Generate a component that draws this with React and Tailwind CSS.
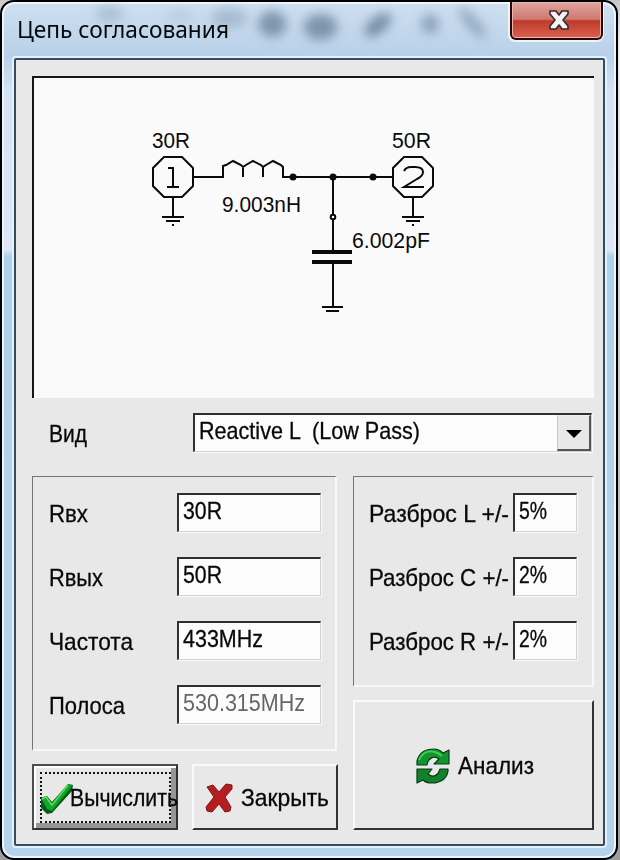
import { useLayoutEffect, useRef, useState } from 'react';

// Single-line text squeezed horizontally to a given width, like a bitmap UI font.
function Fit({ w, className = '', children }) {
  const ref = useRef(null);
  const [scale, setScale] = useState(1);
  useLayoutEffect(() => {
    setScale(w / ref.current.getBoundingClientRect().width);
  }, []);
  return (
    <span className="block shrink-0 whitespace-pre" style={{ width: w }}>
      <span ref={ref} className={`inline-block origin-left ${className}`} style={{ transform: `scaleX(${scale})` }}>
        {children}
      </span>
    </span>
  );
}

const inset = 'border-t-[2px] border-l-[2px] border-r border-b border-t-[#303030] border-l-[#303030] border-r-[#d0d0d0] border-b-[#d0d0d0] shadow-[1px_1px_0_#fafafa] bg-[#fcfcfc]';
const group = 'border-t-[1.5px] border-l-[1.5px] border-r-2 border-b-2 border-t-[#757575] border-l-[#757575] border-r-[#f8f8f8] border-b-[#f8f8f8]';

function Field({ label, lw, value, vw, dim }) {
  return (
    <div className="flex h-[41px] items-start">
      <div className="w-[128px] pt-[6px]"><Fit w={lw}>{label}</Fit></div>
      <div className={`mt-[1px] h-[39px] w-[144px] pl-[4px] ${inset}`}>
        <Fit w={vw} className={dim ? 'text-[#666] [-webkit-text-stroke:0px]' : ''}>{value}</Fit>
      </div>
    </div>
  );
}

function Spread({ label, value }) {
  return (
    <div className="flex h-[41px] items-start">
      <div className="w-[144px] pt-[6px]"><Fit w={140}>{label}</Fit></div>
      <div className={`mt-[1px] h-[39px] w-[64px] pl-[4px] ${inset}`}><Fit w={28}>{value}</Fit></div>
    </div>
  );
}

function Schematic() {
  return (
    <svg width="559" height="319" viewBox="34 78 559 319" fill="none" stroke="#0a0a0a" strokeWidth="2">
      <path d="M164 157h18l11 11v18l-11 11h-18l-11 -11v-18z" />
      <path d="M404 157h18l11 11v18l-11 11h-18l-11 -11v-18z" />
      <path d="M168 168h5v19M167 187h12" />
      <path d="M404 171q2 -4 7 -4h4q8 0 8 5q0 4 -6 7l-13 8h20" />
      <path d="M193 177h30v-11l3 -1l7 -4l8 4l2 2l3 -2l7 -4l8 4l2 2l3 -2l7 -4l8 4l2 2v10h110M243 166v11M263 166v11" />
      <path d="M333 177v74M333 263v45M173 197v20M413 197v20" />
      <path d="M162 217h22M166 221h14M402 217h22M406 221h14M322 307h21M326 311h13" />
      <path d="M172 225h2M412 225h2" />
      <path d="M312 252h40M312 262h40" strokeWidth="4" />
      <g fill="#0a0a0a" stroke="none">
        <circle cx="293" cy="177" r="3.500" />
        <circle cx="333" cy="177" r="3.500" />
        <circle cx="373" cy="177" r="3.500" />
      </g>
      <circle cx="333" cy="217" r="2.300" fill="#fff" />
      <g fill="#0a0a0a" stroke="none" fontFamily="'Liberation Sans', sans-serif" fontSize="22">
        <text x="152" y="148" textLength="38" lengthAdjust="spacingAndGlyphs">30R</text>
        <text x="392" y="148" textLength="39" lengthAdjust="spacingAndGlyphs">50R</text>
        <text x="222" y="212" textLength="79" lengthAdjust="spacingAndGlyphs">9.003nH</text>
        <text x="352" y="248" textLength="78" lengthAdjust="spacingAndGlyphs">6.002pF</text>
      </g>
    </svg>
  );
}

function TitleBar() {
  return (
    <div className="relative flex h-[56px] items-start justify-between pl-[15px] pr-[12px]">
      <svg className="absolute left-0 top-0 h-full w-full" viewBox="3 3 611 56" preserveAspectRatio="none">
        <defs><filter id="haze" x="-20%" y="-50%" width="140%" height="200%"><feGaussianBlur stdDeviation="5.500" /></filter></defs>
        <g filter="url(#haze)" fill="#667f98">
          <ellipse cx="110" cy="15" rx="14" ry="8" opacity=".3" />
          <ellipse cx="180" cy="16" rx="14" ry="7" opacity=".15" />
          <ellipse cx="229" cy="19" rx="18" ry="10" opacity=".35" />
          <ellipse cx="272" cy="25" rx="14" ry="13" opacity=".75" />
          <ellipse cx="320" cy="28" rx="17" ry="13" opacity=".75" />
          <ellipse cx="377" cy="26" rx="16" ry="8" transform="rotate(-40 377 26)" opacity=".85" />
          <ellipse cx="429" cy="25" rx="9" ry="10" opacity=".6" />
          <ellipse cx="471" cy="24" rx="20" ry="6" transform="rotate(50 471 24)" opacity=".55" />
        </g>
      </svg>
      <div className="relative pt-[10px] font-['Noto_Sans','Open_Sans',sans-serif] text-[23px] leading-[34px] [-webkit-text-stroke:0px]">
        <Fit w={212}>Цепь согласования</Fit>
      </div>
      <div className="relative h-[40px] w-[96px] rounded-b-[7px] bg-white/70 px-[2px] pb-[2px]">
        <div className="flex h-[38px] w-[93px] items-center justify-center rounded-b-[6px] border-2 border-t-0 border-[#28090b] bg-[linear-gradient(to_bottom,#dda59f_0%,#cf7a70_48%,#bf3b2c_52%,#d9614f_100%)] pl-[4px] shadow-[inset_0_0_0_1px_#efb5ad]">
          <svg width="24" height="24" viewBox="0 0 24 24" strokeLinejoin="round">
            <path d="M3 3h6l3 4l3 -4h6v3l-5 6l5 6v3h-6l-3 -4l-3 4h-6v-3l5 -6l-5 -6z" fill="#f3f3f3" stroke="#3c2728" strokeWidth="1.600" />
          </svg>
        </div>
      </div>
    </div>
  );
}

export default function App() {
  return (
    <div className="h-[860px] w-[620px] overflow-hidden bg-linear-to-b from-[#c8c8c8] via-[#ececec] via-5% to-[#9d9d9d] font-['Liberation_Sans',sans-serif] text-[24px] leading-[32px] text-[#080808] [-webkit-text-stroke:0.3px]">
      <div className="h-[860px] w-[618px] rounded-[14px] border-2 border-black bg-[linear-gradient(to_bottom,#cfdff0_0px,#b8d1e9_54px,#d5e2f3_90px,#dde7f6_248px,#afd0ea_254px,#b6d3ec_859px)] shadow-[inset_0_0_0_2px_#eaf5ff]">
        <TitleBar />
        <div className="mx-[12px] h-[788px] w-[591px] rounded-[2px] border-2 border-[#354b5e] bg-[#e8e8e8] pl-[16px] pt-[16px] shadow-[0_0_0_2px_#e4f2fd]">
          <div className="h-[322px] w-[562px] border-l-[2px] border-t-[2px] border-[#151515] bg-[#fafafa]">
            <Schematic />
          </div>
          <div className="mt-[14px] flex h-[41px] w-[561px] items-start pl-[17px]">
            <div className="w-[144px] pt-[6px]"><Fit w={38}>Вид</Fit></div>
            <div className={`mt-[1px] flex h-[39px] w-[399px] justify-between pl-[4px] ${inset}`}>
              <Fit w={221}>{'Reactive L  (Low Pass)'}</Fit>
              <div className="flex h-[36px] w-[34px] items-center justify-center border-b-2 border-l border-r-2 border-t border-[#555] border-l-[#c6c6c6] border-t-[#eee] bg-[#e8e8e8]">
                <div className="mt-[2px] border-x-[8px] border-t-[8px] border-x-transparent border-t-black" />
              </div>
            </div>
          </div>
          <div className="mt-[23px] flex gap-[15px]">
            <div className="flex flex-col">
              <div className={`flex h-[275px] w-[305px] flex-col gap-[23px] pl-[16px] pt-[15px] ${group}`}>
                <Field label="Rвх" lw={39} value="30R" vw={39} />
                <Field label="Rвых" lw={54} value="50R" vw={39} />
                <Field label="Частота" lw={84} value="433MHz" vw={80} />
                <Field label="Полоса" lw={76} value="530.315MHz" vw={122} dim />
              </div>
              <div className="mt-[13px] flex gap-[14px]">
                <div className="h-[66px] w-[146px] border-2 border-[#4d4d4d] border-r-[#333] border-b-[#333] shadow-[inset_2px_2px_0_#fff,inset_-5px_-5px_0_#969696]">
                  <div className="ml-[6px] mt-[6px] flex h-[51px] w-[131px] items-center border-2 border-dotted border-[#111]">
                    <svg className="-ml-[2px] mt-[2px] shrink-0" width="34" height="32" viewBox="0 0 34 32">
                      <path d="M1 15l6 -2l5 6l16 -18l5 1l-1 6l-20 22l-5 1l-6 -6z" fill="#075d18" />
                      <path d="M1 15l5 -2l6 8l16 -20l4 2l-20 25l-5 -2z" fill="#12a52a" />
                      <path d="M2 16l4 -2l6 8l16 -20" fill="none" stroke="#63df5c" strokeWidth="1.500" />
                    </svg>
                    <div className="-ml-[4px]"><Fit w={108}>Вычислить</Fit></div>
                  </div>
                </div>
                <div className="flex h-[66px] w-[146px] items-center border-2 border-[#333] border-l-[#fafafa] border-t-[#fafafa] pl-[10px]">
                  <svg className="mt-[2px] shrink-0" width="30" height="32" viewBox="0 0 30 32">
                    <path d="M3 5l6 -2l6 7l7 -8l6 1v4l-7 8l6 10l-1 4l-5 1l-6 -8l-7 8l-5 -1l-1 -4l8 -10z" fill="#b51d21" stroke="#7f1518" strokeWidth="1" strokeLinejoin="round" />
                  </svg>
                  <div className="ml-[7px] pt-[2px]"><Fit w={88}>Закрыть</Fit></div>
                </div>
              </div>
            </div>
            <div className="flex flex-col">
              <div className={`flex h-[211px] w-[241px] flex-col gap-[23px] pl-[15px] pt-[15px] ${group}`}>
                <Spread label="Разброс L +/-" value="5%" />
                <Spread label="Разброс C +/-" value="2%" />
                <Spread label="Разброс R +/-" value="2%" />
              </div>
              <div className="mt-[13px] flex h-[130px] w-[241px] items-center border-2 border-[#333] border-l-[#fafafa] border-t-[#fafafa] pl-[60px]">
                <svg className="mt-[2px] shrink-0" width="38" height="38" viewBox="0 0 38 38">
                  <g stroke="#063c16" strokeWidth="1.200" strokeLinejoin="round">
                    <path d="M2 18v-4c2 -8 8 -12 17 -12c4 0 7 2 9 4l6 -3v14h-15l5 -5c-5 -4 -11 -1 -12 6z" fill="#159331" />
                    <path d="M33 22v2c-1 8 -8 12 -16 12c-4 0 -7 -1 -9 -3l-6 3v-14h15l-4 5c5 4 10 2 12 -5z" fill="#12812a" />
                  </g>
                  <path d="M4 13c3 -7 9 -10 16 -8c3 1 5 2 7 4" fill="none" stroke="#39d34d" strokeWidth="2" />
                </svg>
                <div className="ml-[5px] pt-[2px]"><Fit w={76}>Анализ</Fit></div>
              </div>
            </div>
          </div>
        </div>
      </div>
    </div>
  );
}
